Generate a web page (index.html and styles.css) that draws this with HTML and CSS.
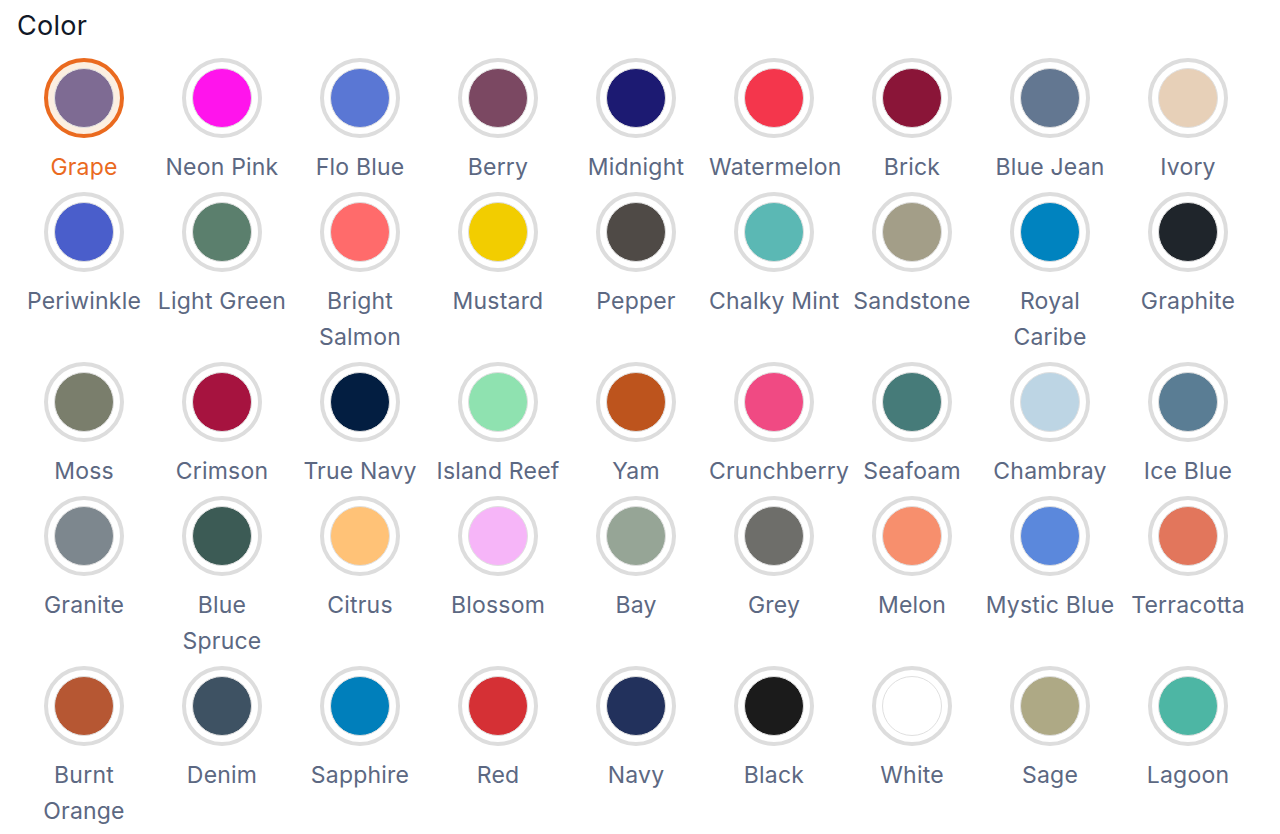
FILE: index.html
```html
<!DOCTYPE html>
<html lang="en">
<head>
    <meta charset="UTF-8">
    <meta name="viewport" content="width=device-width, initial-scale=1.0">
    <title>Color</title>
    <link rel="stylesheet" href="styles.css">
</head>
<body>
    <h2 class="title">Color</h2>

    <div class="swatches">
        <div class="swatch selected"><span class="ring"><span class="dot" style="background:#7e6b93"></span></span><span class="label">Grape</span></div>
        <div class="swatch"><span class="ring"><span class="dot" style="background:#ff14ec"></span></span><span class="label">Neon Pink</span></div>
        <div class="swatch"><span class="ring"><span class="dot" style="background:#5a77d4"></span></span><span class="label">Flo Blue</span></div>
        <div class="swatch"><span class="ring"><span class="dot" style="background:#7b4862"></span></span><span class="label">Berry</span></div>
        <div class="swatch"><span class="ring"><span class="dot" style="background:#1c1a72"></span></span><span class="label">Midnight</span></div>
        <div class="swatch"><span class="ring"><span class="dot" style="background:#f4364c"></span></span><span class="label">Watermelon</span></div>
        <div class="swatch"><span class="ring"><span class="dot" style="background:#8a1538"></span></span><span class="label">Brick</span></div>
        <div class="swatch"><span class="ring"><span class="dot" style="background:#637791"></span></span><span class="label">Blue Jean</span></div>
        <div class="swatch"><span class="ring"><span class="dot" style="background:#e7d0b8"></span></span><span class="label">Ivory</span></div>

        <div class="swatch"><span class="ring"><span class="dot" style="background:#4a5ecb"></span></span><span class="label">Periwinkle</span></div>
        <div class="swatch"><span class="ring"><span class="dot" style="background:#5b7f6d"></span></span><span class="label">Light Green</span></div>
        <div class="swatch"><span class="ring"><span class="dot" style="background:#ff6b6b"></span></span><span class="label">Bright<br>Salmon</span></div>
        <div class="swatch"><span class="ring"><span class="dot" style="background:#f2cd00"></span></span><span class="label">Mustard</span></div>
        <div class="swatch"><span class="ring"><span class="dot" style="background:#4f4a46"></span></span><span class="label">Pepper</span></div>
        <div class="swatch"><span class="ring"><span class="dot" style="background:#5bb8b4"></span></span><span class="label">Chalky Mint</span></div>
        <div class="swatch"><span class="ring"><span class="dot" style="background:#a39e88"></span></span><span class="label">Sandstone</span></div>
        <div class="swatch"><span class="ring"><span class="dot" style="background:#0083bf"></span></span><span class="label">Royal<br>Caribe</span></div>
        <div class="swatch"><span class="ring"><span class="dot" style="background:#1f252b"></span></span><span class="label">Graphite</span></div>

        <div class="swatch"><span class="ring"><span class="dot" style="background:#7a7e6c"></span></span><span class="label">Moss</span></div>
        <div class="swatch"><span class="ring"><span class="dot" style="background:#a6133f"></span></span><span class="label">Crimson</span></div>
        <div class="swatch"><span class="ring"><span class="dot" style="background:#031e41"></span></span><span class="label">True Navy</span></div>
        <div class="swatch"><span class="ring"><span class="dot" style="background:#8fe2b0"></span></span><span class="label">Island Reef</span></div>
        <div class="swatch"><span class="ring"><span class="dot" style="background:#bd541d"></span></span><span class="label">Yam</span></div>
        <div class="swatch"><span class="ring"><span class="dot" style="background:#f04a83"></span></span><span class="label">Crunchberry</span></div>
        <div class="swatch"><span class="ring"><span class="dot" style="background:#467b79"></span></span><span class="label">Seafoam</span></div>
        <div class="swatch"><span class="ring"><span class="dot" style="background:#bdd5e4"></span></span><span class="label">Chambray</span></div>
        <div class="swatch"><span class="ring"><span class="dot" style="background:#5a7d94"></span></span><span class="label">Ice Blue</span></div>

        <div class="swatch"><span class="ring"><span class="dot" style="background:#7d878e"></span></span><span class="label">Granite</span></div>
        <div class="swatch"><span class="ring"><span class="dot" style="background:#3c5b55"></span></span><span class="label">Blue<br>Spruce</span></div>
        <div class="swatch"><span class="ring"><span class="dot" style="background:#ffc277"></span></span><span class="label">Citrus</span></div>
        <div class="swatch"><span class="ring"><span class="dot" style="background:#f6b5f8"></span></span><span class="label">Blossom</span></div>
        <div class="swatch"><span class="ring"><span class="dot" style="background:#96a596"></span></span><span class="label">Bay</span></div>
        <div class="swatch"><span class="ring"><span class="dot" style="background:#6e6e6a"></span></span><span class="label">Grey</span></div>
        <div class="swatch"><span class="ring"><span class="dot" style="background:#f78f6d"></span></span><span class="label">Melon</span></div>
        <div class="swatch"><span class="ring"><span class="dot" style="background:#5b88dc"></span></span><span class="label">Mystic Blue</span></div>
        <div class="swatch"><span class="ring"><span class="dot" style="background:#e2765c"></span></span><span class="label">Terracotta</span></div>

        <div class="swatch"><span class="ring"><span class="dot" style="background:#b65733"></span></span><span class="label">Burnt<br>Orange</span></div>
        <div class="swatch"><span class="ring"><span class="dot" style="background:#3e5263"></span></span><span class="label">Denim</span></div>
        <div class="swatch"><span class="ring"><span class="dot" style="background:#007fbb"></span></span><span class="label">Sapphire</span></div>
        <div class="swatch"><span class="ring"><span class="dot" style="background:#d53035"></span></span><span class="label">Red</span></div>
        <div class="swatch"><span class="ring"><span class="dot" style="background:#22315c"></span></span><span class="label">Navy</span></div>
        <div class="swatch"><span class="ring"><span class="dot" style="background:#1b1b1b"></span></span><span class="label">Black</span></div>
        <div class="swatch"><span class="ring"><span class="dot" style="background:#ffffff"></span></span><span class="label">White</span></div>
        <div class="swatch"><span class="ring"><span class="dot" style="background:#aea985"></span></span><span class="label">Sage</span></div>
        <div class="swatch"><span class="ring"><span class="dot" style="background:#4db6a4"></span></span><span class="label">Lagoon</span></div>
    </div>
</body>
</html>
```

FILE: styles.css
```css
body {
    font-family: 'Inter', 'Noto Sans', sans-serif;
    background-color: #ffffff;
    margin: 0;
    padding: 8px 15px 0;
}

.title {
    margin: 0 0 14px 2px;
    font-size: 27px;
    line-height: 36px;
    font-weight: 400;
    letter-spacing: 0.3px;
    color: #111827;
}

.swatches {
    display: grid;
    grid-template-columns: repeat(9, 138px);
}

.swatch {
    display: flex;
    flex-direction: column;
    align-items: center;
    padding: 0 4px 7px;
    cursor: pointer;
}

.ring {
    box-sizing: border-box;
    width: 80px;
    height: 80px;
    padding: 6px;
    border: 4px solid #dddddd;
    border-radius: 50%;
    background-color: #ffffff;
}

.dot {
    display: block;
    box-sizing: border-box;
    width: 60px;
    height: 60px;
    border-radius: 50%;
    border: 1px solid #e0e0e0;
}

.label {
    align-self: stretch;
    margin-top: 11px;
    font-size: 23px;
    line-height: 36px;
    letter-spacing: 0.2px;
    color: #5c6882;
    text-align: center;
    white-space: nowrap;
}

.selected .ring {
    border-color: #ea6a1f;
    background-color: #fcefe1;
}

.selected .label {
    color: #ea6a1f;
}
```
